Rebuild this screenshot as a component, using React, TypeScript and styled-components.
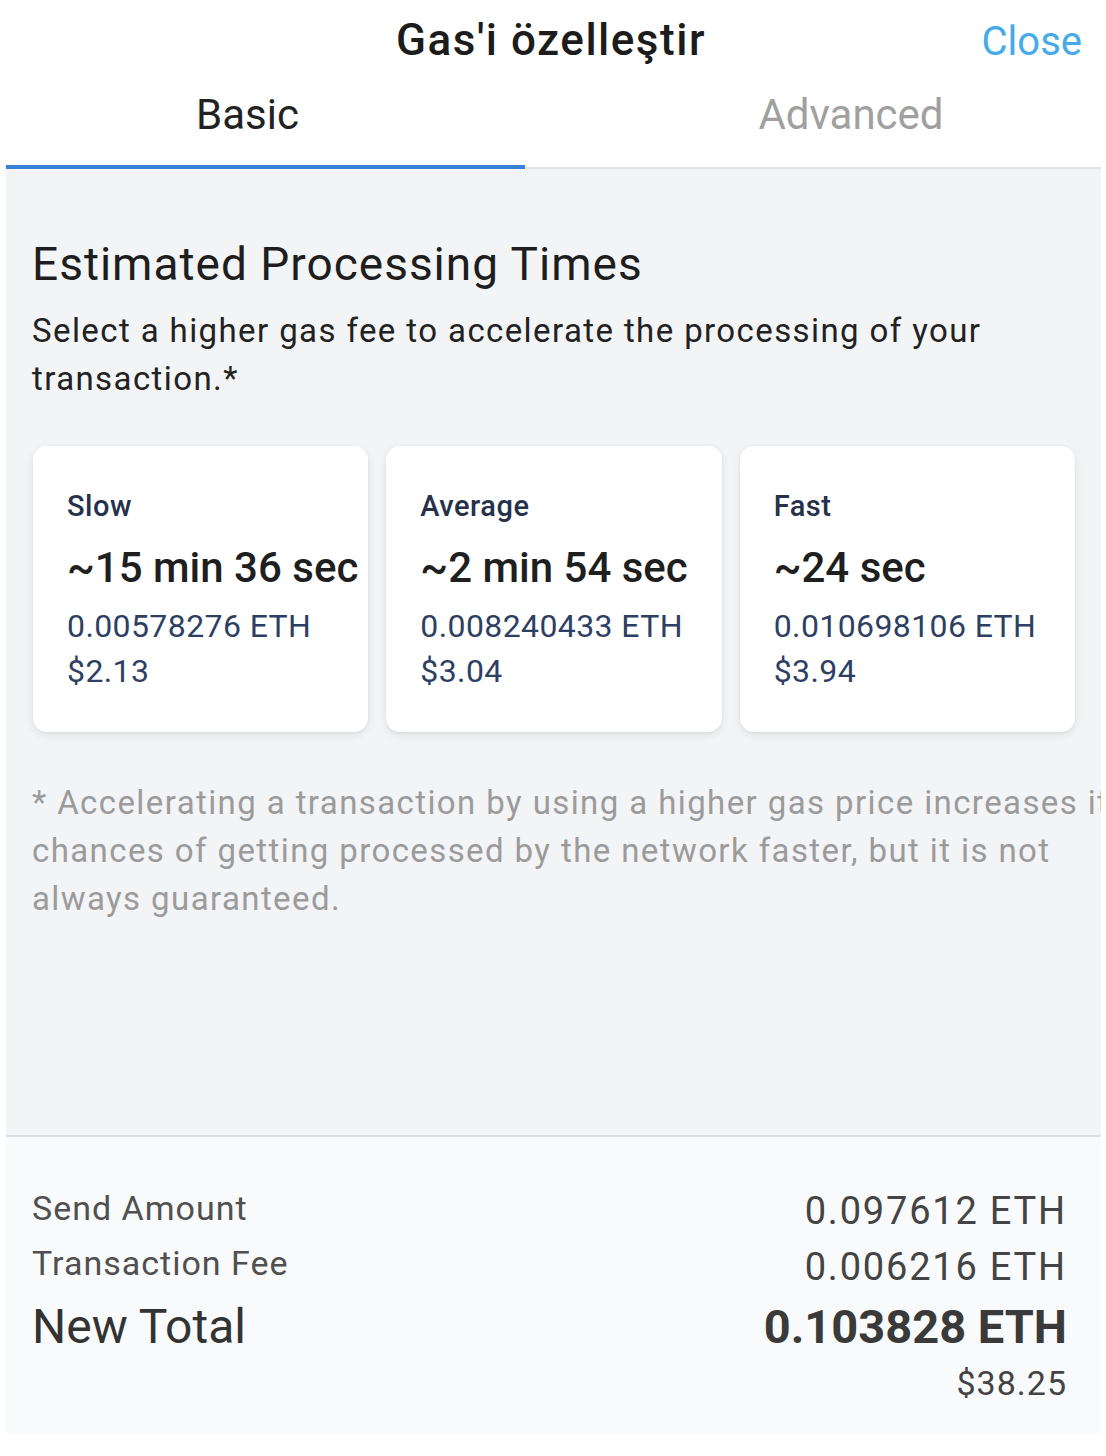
import { ReactElement } from 'react'
import styled, { createGlobalStyle } from 'styled-components'

const GlobalStyle = createGlobalStyle`
  html, body {
    margin: 0;
    padding: 0;
    background: #ffffff;
    font-family: Roboto, 'Noto Sans', Arial, sans-serif;
  }
`

const Page = styled.div`
  width: 1106px;
  height: 1456px;
  padding: 0 5px 0 6px;
  box-sizing: border-box;
  background: #ffffff;
`

const Sheet = styled.div`
  height: 1433px;
  display: flex;
  flex-direction: column;
  overflow: hidden;
`

const Header = styled.header`
  background: #ffffff;
`

const TitleRow = styled.div`
  display: grid;
  grid-template-columns: 1fr auto 1fr;
  align-items: baseline;
  padding: 15px 19px 0 14px;
`

const Title = styled.h1`
  grid-column: 2;
  margin: 0;
  font-size: 44px;
  line-height: 50px;
  letter-spacing: 1.5px;
  font-weight: 500;
  color: #1c1c1c;
`

const CloseButton = styled.button`
  justify-self: end;
  border: none;
  background: none;
  padding: 0;
  font-family: inherit;
  font-size: 40px;
  line-height: 50px;
  color: #45aae8;
  cursor: pointer;
`

const TabBar = styled.div`
  display: flex;
  margin-top: 24px;
  border-bottom: 2px solid #dfe2e6;
`

const Tab = styled.div<{ $active?: boolean; $width: number; $shift: number }>`
  width: ${(p) => p.$width}px;
  box-sizing: border-box;
  padding: 0 ${(p) => (p.$shift < 0 ? -p.$shift * 2 : 0)}px 26px ${(p) => (p.$shift > 0 ? p.$shift * 2 : 0)}px;
  text-align: center;
  font-size: 42px;
  line-height: 48px;
  color: ${(p) => (p.$active ? '#222222' : '#a0a0a0')};
  border-bottom: 4px solid ${(p) => (p.$active ? '#3a80d6' : 'transparent')};
  margin-bottom: -2px;
`

const Main = styled.main`
  flex: 1;
  background: #f3f4f6;
  padding: 69px 26px 0 27px;
`

const Heading = styled.h2`
  margin: 0 0 0 -1px;
  font-size: 46px;
  line-height: 52px;
  letter-spacing: 1px;
  font-weight: 400;
  color: #1e1e1e;
`

const Lead = styled.p`
  margin: 17px 0 0 -1px;
  font-size: 33px;
  line-height: 48px;
  letter-spacing: 1.4px;
  color: #222222;
`

const Cards = styled.div`
  display: grid;
  grid-template-columns: repeat(3, 1fr);
  gap: 18px;
  margin-top: 43px;
`

const Card = styled.div`
  background: #ffffff;
  border-radius: 14px;
  box-shadow: 0 3px 10px rgba(0, 0, 0, 0.08), 0 1px 3px rgba(0, 0, 0, 0.05);
  padding: 43px 0 38px 34px;
  white-space: nowrap;
`

const Speed = styled.div`
  font-size: 29px;
  line-height: 34px;
  letter-spacing: 0.5px;
  font-weight: 500;
  color: #26314b;
`

const Duration = styled.div`
  margin-top: 20px;
  font-size: 42px;
  line-height: 50px;
  font-weight: 500;
  color: #1f1f1f;
`

const Price = styled.div<{ $first?: boolean }>`
  margin-top: ${(p) => (p.$first ? 11 : 0)}px;
  font-size: 32px;
  line-height: 45px;
  letter-spacing: 0.4px;
  color: #2d3f63;
`

// the reference clips the end of the first line at the sheet edge
const Footnote = styled.p`
  width: 1115px;
  margin: 47px 0 0 -1px;
  font-size: 33px;
  line-height: 48px;
  letter-spacing: 1.4px;
  color: #9b9b9b;
`

const Footer = styled.footer`
  height: 298px;
  box-sizing: border-box;
  background: #f9fafb;
  border-top: 2px solid #dadde1;
  padding: 44px 34px 0 26px;
  display: flex;
  justify-content: space-between;
  align-items: flex-start;
`

const Column = styled.div<{ $right?: boolean }>`
  display: flex;
  flex-direction: column;
  align-items: ${(p) => (p.$right ? 'flex-end' : 'flex-start')};
  padding-top: ${(p) => (p.$right ? 2 : 0)}px;
`

const Label = styled.div`
  font-size: 34px;
  line-height: 55px;
  letter-spacing: 1px;
  color: #505050;
`

const TotalLabel = styled.div`
  margin-top: 6px;
  font-size: 48px;
  line-height: 60px;
  color: #333333;
`

const Value = styled.div`
  font-size: 38px;
  line-height: 56px;
  letter-spacing: 1.8px;
  color: #444444;
`

const TotalValue = styled.div`
  font-size: 47px;
  line-height: 64px;
  font-weight: 700;
  color: #3a3a3a;
`

const Fiat = styled.div`
  font-size: 34px;
  line-height: 48px;
  letter-spacing: 1px;
  color: #444444;
`

const speeds = [
  { name: 'Slow', time: '~15 min 36 sec', eth: '0.00578276 ETH', usd: '$2.13' },
  { name: 'Average', time: '~2 min 54 sec', eth: '0.008240433 ETH', usd: '$3.04' },
  { name: 'Fast', time: '~24 sec', eth: '0.010698106 ETH', usd: '$3.94' },
]

const App = (): ReactElement => {
  return (
    <Page>
      <GlobalStyle />
      <Sheet>
        <Header>
          <TitleRow>
            <Title>Gas'i özelleştir</Title>
            <CloseButton>Close</CloseButton>
          </TitleRow>
          <TabBar>
            <Tab $active $width={519} $shift={-18}>
              Basic
            </Tab>
            <Tab $width={576} $shift={38}>
              Advanced
            </Tab>
          </TabBar>
        </Header>
        <Main>
          <Heading>Estimated Processing Times</Heading>
          <Lead>Select a higher gas fee to accelerate the processing of your transaction.*</Lead>
          <Cards>
            {speeds.map((s) => (
              <Card key={s.name}>
                <Speed>{s.name}</Speed>
                <Duration>{s.time}</Duration>
                <Price $first>{s.eth}</Price>
                <Price>{s.usd}</Price>
              </Card>
            ))}
          </Cards>
          <Footnote>
            * Accelerating a transaction by using a higher gas price increases its chances of getting
            processed by the network faster, but it is not always guaranteed.
          </Footnote>
        </Main>
        <Footer>
          <Column>
            <Label>Send Amount</Label>
            <Label>Transaction Fee</Label>
            <TotalLabel>New Total</TotalLabel>
          </Column>
          <Column $right>
            <Value>0.097612 ETH</Value>
            <Value>0.006216 ETH</Value>
            <TotalValue>0.103828 ETH</TotalValue>
            <Fiat>$38.25</Fiat>
          </Column>
        </Footer>
      </Sheet>
    </Page>
  )
}

export default App
